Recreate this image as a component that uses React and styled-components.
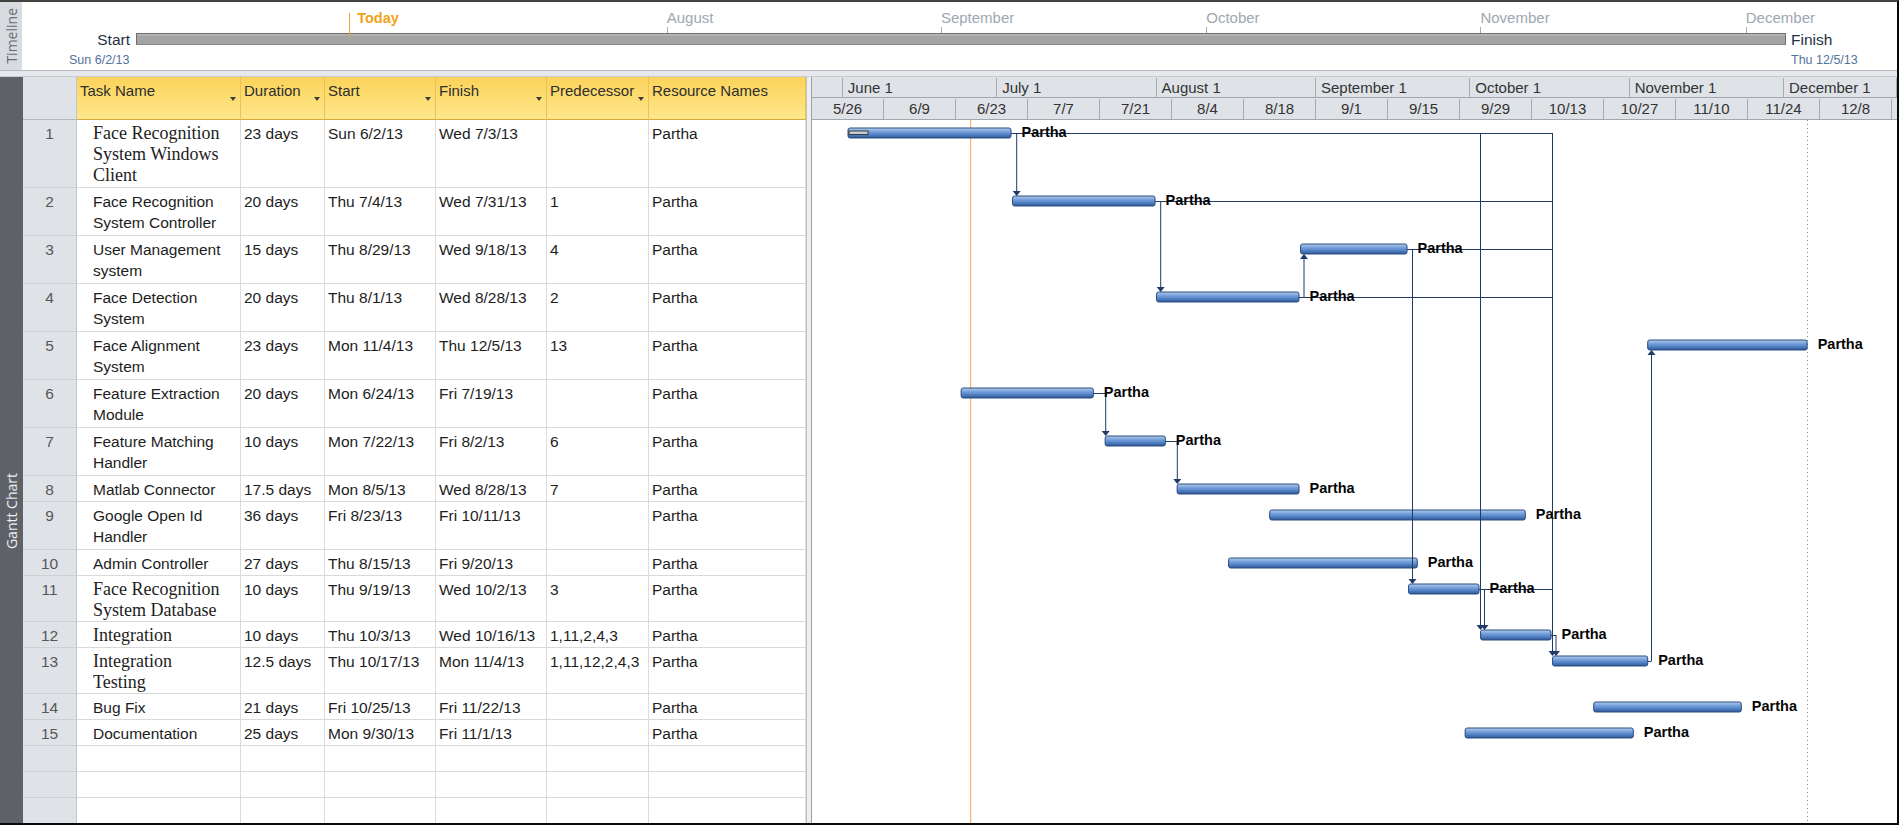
import React from 'react';
import styled, { createGlobalStyle } from 'styled-components';

const DAY = 72 / 14; // px per day in the gantt timescale
const COLS = '54px 164px 84px 111px 111px 102px 157px';

const GlobalStyle = createGlobalStyle`
  html, body {
    margin: 0;
    padding: 0;
    background: #fff;
  }
  body {
    font-family: "Liberation Sans", Arial, sans-serif;
    color: #1c1c1c;
  }
  * {
    box-sizing: border-box;
  }
`;

const tasks = [
  { id: 1, name: ['Face Recognition', 'System Windows', 'Client'], serif: true, duration: '23 days', start: 'Sun 6/2/13', finish: 'Wed 7/3/13', pred: '', h: 68, s: 7, e: 38.7 },
  { id: 2, name: ['Face Recognition', 'System Controller'], duration: '20 days', start: 'Thu 7/4/13', finish: 'Wed 7/31/13', pred: '1', h: 48, s: 39, e: 66.7 },
  { id: 3, name: ['User Management', 'system'], duration: '15 days', start: 'Thu 8/29/13', finish: 'Wed 9/18/13', pred: '4', h: 48, s: 95, e: 115.7 },
  { id: 4, name: ['Face Detection', 'System'], duration: '20 days', start: 'Thu 8/1/13', finish: 'Wed 8/28/13', pred: '2', h: 48, s: 67, e: 94.7 },
  { id: 5, name: ['Face Alignment', 'System'], duration: '23 days', start: 'Mon 11/4/13', finish: 'Thu 12/5/13', pred: '13', h: 48, s: 162.5, e: 193.5 },
  { id: 6, name: ['Feature Extraction', 'Module'], duration: '20 days', start: 'Mon 6/24/13', finish: 'Fri 7/19/13', pred: '', h: 48, s: 29, e: 54.7 },
  { id: 7, name: ['Feature Matching', 'Handler'], duration: '10 days', start: 'Mon 7/22/13', finish: 'Fri 8/2/13', pred: '6', h: 48, s: 57, e: 68.7 },
  { id: 8, name: ['Matlab Connector'], duration: '17.5 days', start: 'Mon 8/5/13', finish: 'Wed 8/28/13', pred: '7', h: 26, s: 71, e: 94.7 },
  { id: 9, name: ['Google Open Id', 'Handler'], duration: '36 days', start: 'Fri 8/23/13', finish: 'Fri 10/11/13', pred: '', h: 48, s: 89, e: 138.7 },
  { id: 10, name: ['Admin Controller'], duration: '27 days', start: 'Thu 8/15/13', finish: 'Fri 9/20/13', pred: '', h: 26, s: 81, e: 117.7 },
  { id: 11, name: ['Face Recognition', 'System Database'], serif: true, duration: '10 days', start: 'Thu 9/19/13', finish: 'Wed 10/2/13', pred: '3', h: 46, s: 116, e: 129.7 },
  { id: 12, name: ['Integration'], serif: true, duration: '10 days', start: 'Thu 10/3/13', finish: 'Wed 10/16/13', pred: '1,11,2,4,3', h: 26, s: 130, e: 143.7 },
  { id: 13, name: ['Integration', 'Testing'], serif: true, duration: '12.5 days', start: 'Thu 10/17/13', finish: 'Mon 11/4/13', pred: '1,11,12,2,4,3', h: 46, s: 144, e: 162.5 },
  { id: 14, name: ['Bug Fix'], duration: '21 days', start: 'Fri 10/25/13', finish: 'Fri 11/22/13', pred: '', h: 26, s: 152, e: 180.7 },
  { id: 15, name: ['Documentation'], duration: '25 days', start: 'Mon 9/30/13', finish: 'Fri 11/1/13', pred: '', h: 26, s: 127, e: 159.7 },
];

const columns = [
  { key: 'name', label: 'Task Name', arrow: true },
  { key: 'duration', label: 'Duration', arrow: true },
  { key: 'start', label: 'Start', arrow: true },
  { key: 'finish', label: 'Finish', arrow: true },
  { key: 'pred', label: 'Predecessor', arrow: true },
  { key: 'res', label: 'Resource Names', arrow: false },
];

const months = [
  { w: 6, label: '' },
  { w: 30, label: 'June 1' },
  { w: 31, label: 'July 1' },
  { w: 31, label: 'August 1' },
  { w: 30, label: 'September 1' },
  { w: 31, label: 'October 1' },
  { w: 30, label: 'November 1' },
  { w: 0, label: 'December 1' },
];

const weeks = ['5/26', '6/9', '6/23', '7/7', '7/21', '8/4', '8/18', '9/1', '9/15', '9/29', '10/13', '10/27', '11/10', '11/24', '12/8'];

const timelineMarks = [
  { label: 'August', d: 67 },
  { label: 'September', d: 98 },
  { label: 'October', d: 128 },
  { label: 'November', d: 159 },
  { label: 'December', d: 189 },
];

// timeline strip scale, days counted from 5/26
const tlX = (d) => 114 + (d - 7) * 8.845;

/* ---------- frame ---------- */

const Frame = styled.div`
  width: 1899px;
  height: 825px;
  border-top: 2px solid #424242;
  border-right: 2px solid #080808;
  border-bottom: 2px solid #080808;
  display: flex;
  flex-direction: column;
  overflow: hidden;
  background: #fff;
`;

const SideTab = styled.div`
  width: ${({ $w }) => $w}px;
  flex: none;
  display: flex;
  align-items: center;
  justify-content: center;
  padding-top: ${({ $offset }) => $offset || 0}px;
  background: ${({ $dark }) => ($dark ? '#5e6268' : '#d8dbe0')};
  color: ${({ $dark }) => ($dark ? '#eceef0' : '#686c72')};
`;

const SideLabel = styled.span`
  writing-mode: vertical-rl;
  transform: rotate(180deg);
  font-family: "Open Sans", "Liberation Sans", sans-serif;
  font-size: 14px;
  white-space: nowrap;
`;

/* ---------- timeline ---------- */

const TimelineBand = styled.section`
  height: 68px;
  flex: none;
  display: flex;
`;

const TimelineCanvas = styled.div`
  position: relative;
  flex: 1;
`;

const TimelineBar = styled.div`
  position: absolute;
  left: 114px;
  top: 31px;
  width: 1650px;
  height: 12px;
  border: 1px solid #6e6e6e;
  border-bottom-color: #878787;
  background: linear-gradient(#bcbcbc 0, #a5a5a5 25%, #a2a2a2 100%);
`;

const EndLabel = styled.div`
  position: absolute;
  top: ${({ $top }) => $top}px;
  left: ${({ $left }) => $left}px;
  width: ${({ $width }) => $width || 'auto'};
  text-align: ${({ $align }) => $align || 'left'};
  font-size: ${({ $small }) => ($small ? 12.5 : 15.5)}px;
  line-height: ${({ $small }) => ($small ? 15 : 18)}px;
  color: ${({ $small }) => ($small ? '#52739a' : '#1f3144')};
  white-space: nowrap;
`;

const DateMark = styled.div`
  position: absolute;
  top: 7px;
  display: flex;
  flex-direction: column;
  align-items: flex-start;
`;

const MarkText = styled.span`
  font-size: 15px;
  line-height: 18px;
  color: #9ea7b2;
  white-space: nowrap;
`;

const MarkTick = styled.span`
  width: 1px;
  height: 6px;
  background: #a8b0ba;
`;

const TodayMark = styled.div`
  position: absolute;
  top: 11px;
  width: 1px;
  height: 25px;
  background: #f2a23c;
`;

const TodayText = styled.span`
  position: absolute;
  left: 8px;
  top: -4px;
  font-size: 14.5px;
  line-height: 18px;
  font-weight: bold;
  color: #f0a218;
`;

const Separator = styled.div`
  height: 7px;
  flex: none;
  border-top: 1px solid #b6bac0;
  border-bottom: 1px solid #c8cbd0;
  background: #e6e8eb;
`;

/* ---------- sheet ---------- */

const Workspace = styled.main`
  flex: 1;
  display: flex;
  min-height: 0;
`;

const Sheet = styled.div`
  width: 783px;
  flex: none;
  display: flex;
  flex-direction: column;
  overflow: hidden;
`;

const GridRow = styled.div`
  display: grid;
  grid-template-columns: ${COLS};
  height: ${({ $h }) => $h}px;
  flex: none;
`;

const Corner = styled.div`
  background: #dfe3e8;
  border-right: 1px solid #c2c6cc;
  border-bottom: 1px solid #b7bbc1;
`;

const HeadCell = styled.div`
  display: flex;
  justify-content: space-between;
  align-items: flex-start;
  padding: 5px 0 0 3px;
  background: linear-gradient(#fbd35b 0%, #fddc70 45%, #fee78c 100%);
  border-right: 1px solid #e9c35a;
  border-bottom: 1px solid #d8aa36;
  font-size: 15px;
  line-height: 18px;
  color: #2e2e2e;
  white-space: nowrap;
`;

const SortArrow = styled.span`
  margin: 15px 4px 0 0;
  border-left: 3.5px solid transparent;
  border-right: 3.5px solid transparent;
  border-top: 4px solid #3c3c3c;
`;

const IdCell = styled.div`
  background: #dfe3e8;
  border-right: 1px solid #c2c6cc;
  border-bottom: 1px solid #cdd1d6;
  padding-top: 3px;
  text-align: center;
  font-size: 15.5px;
  line-height: 21px;
  color: #575757;
`;

const Cell = styled.div`
  padding: 3px 0 0 ${({ $indent }) => ($indent ? 16 : 3)}px;
  border-right: 1px solid #dcdcdc;
  border-bottom: 1px solid #d9d9d9;
  font-family: ${({ $serif }) => ($serif ? '"Liberation Serif", "Times New Roman", serif' : 'inherit')};
  font-size: ${({ $serif }) => ($serif ? 18 : 15.5)}px;
  line-height: 21px;
  white-space: nowrap;
  overflow: hidden;
  color: #1d1d1d;
`;

const Splitter = styled.div`
  width: 6px;
  flex: none;
  background: #eeeff1;
  border-left: 1px solid #bfc2c6;
  border-right: 1px solid #9c9fa3;
`;

/* ---------- chart ---------- */

const ChartPane = styled.div`
  flex: 1;
  display: flex;
  flex-direction: column;
  min-width: 0;
`;

const Tier = styled.div`
  height: ${({ $h }) => $h}px;
  flex: none;
  display: flex;
  padding-top: ${({ $pad }) => $pad || 0}px;
  background: #dfe2e7;
  border-bottom: 1px solid #a3a6aa;
`;

const TierCell = styled.div`
  flex: ${({ $grow }) => ($grow ? '1' : 'none')};
  padding-left: ${({ $center }) => ($center ? 0 : 5)}px;
  border-right: 1px solid #a7aaae;
  text-align: ${({ $center }) => ($center ? 'center' : 'left')};
  font-size: 15px;
  line-height: 20px;
  color: #333;
  white-space: nowrap;
  overflow: hidden;
`;

const ChartBody = styled.div`
  flex: 1;
  overflow: hidden;
`;

const LabelText = styled.text`
  font-family: "Liberation Sans", Arial, sans-serif;
  font-size: 14.5px;
  font-weight: bold;
  fill: #050505;
`;

function TimelineStrip() {
  return (
    <TimelineBand>
      <SideTab $w={22}>
        <SideLabel>Timeline</SideLabel>
      </SideTab>
      <TimelineCanvas>
        <TimelineBar />
        <EndLabel $top={29} $left={0} $width="108px" $align="right">Start</EndLabel>
        <EndLabel $top={51} $left={47} $small>Sun 6/2/13</EndLabel>
        <EndLabel $top={29} $left={1769}>Finish</EndLabel>
        <EndLabel $top={51} $left={1769} $small>Thu 12/5/13</EndLabel>
        {timelineMarks.map((m) => (
          <DateMark key={m.label} style={{ left: tlX(m.d) }}>
            <MarkText>{m.label}</MarkText>
            <MarkTick />
          </DateMark>
        ))}
        <TodayMark style={{ left: tlX(31.1) }}>
          <TodayText>Today</TodayText>
        </TodayMark>
      </TimelineCanvas>
    </TimelineBand>
  );
}

function TaskSheet() {
  const blanks = [0, 1, 2];
  return (
    <Sheet>
      <GridRow $h={43}>
        <Corner />
        {columns.map((c) => (
          <HeadCell key={c.key}>
            {c.label}
            {c.arrow && <SortArrow />}
          </HeadCell>
        ))}
      </GridRow>
      {tasks.map((t) => (
        <GridRow key={t.id} $h={t.h}>
          <IdCell>{t.id}</IdCell>
          <Cell $indent $serif={t.serif}>
            {t.name.map((line, i) => (
              <React.Fragment key={line}>
                {i > 0 && <br />}
                {line}
              </React.Fragment>
            ))}
          </Cell>
          <Cell>{t.duration}</Cell>
          <Cell>{t.start}</Cell>
          <Cell>{t.finish}</Cell>
          <Cell>{t.pred}</Cell>
          <Cell>Partha</Cell>
        </GridRow>
      ))}
      {blanks.map((b) => (
        <GridRow key={b} $h={26}>
          <IdCell />
          <Cell />
          <Cell />
          <Cell />
          <Cell />
          <Cell />
          <Cell />
        </GridRow>
      ))}
    </Sheet>
  );
}

function GanttBody() {
  const tops = [];
  let acc = 0;
  tasks.forEach((t) => {
    tops[t.id] = acc;
    acc += t.h;
  });
  const X = (d) => d * DAY;
  const cy = (id) => tops[id] + 13;
  const barTop = (id) => tops[id] + 8;
  const barBot = (id) => tops[id] + 18;
  const endX = (id) => X(tasks[id - 1].e);

  const runs = [
    [1, 740.5], [2, 740.5], [3, 740.5], [4, 740.5], [11, 740.5],
    [12, 744], [13, 839.5], [6, 293.7], [7, 365.3],
  ];
  const drops = [
    [204.7, cy(1), barTop(2)],
    [348.7, cy(2), barTop(4)],
    [492, cy(4), barBot(3)],
    [600.5, cy(3), barTop(11)],
    [668.5, cy(1), barTop(12)],
    [672.5, cy(11), barTop(12)],
    [740.5, cy(1), barTop(13)],
    [744, cy(12), barTop(13)],
    [839.5, cy(13), barBot(5)],
    [293.7, cy(6), barTop(7)],
    [365.3, cy(7), barTop(8)],
  ];

  return (
    <ChartBody>
      <svg width="1085" height="703" viewBox="0 0 1085 703">
        <defs>
          <linearGradient id="barFill" x1="0" y1="0" x2="0" y2="1">
            <stop offset="0" stopColor="#b4cdf0" />
            <stop offset="0.3" stopColor="#7fa7de" />
            <stop offset="0.65" stopColor="#5383c6" />
            <stop offset="1" stopColor="#2c5796" />
          </linearGradient>
        </defs>
        <line x1="158.7" y1="0" x2="158.7" y2="703" stroke="#f3a35e" strokeWidth="1" />
        <line x1="995.5" y1="0" x2="995.5" y2="703" stroke="#8a8a8a" strokeWidth="1" strokeDasharray="1 3" />
        {tasks.map((t) => (
          <rect
            key={t.id}
            x={X(t.s)}
            y={barTop(t.id)}
            width={X(t.e) - X(t.s)}
            height="10"
            rx="2"
            fill="url(#barFill)"
            stroke="#2b4d7e"
            strokeWidth="1"
          />
        ))}
        <rect x={X(7) + 1} y={cy(1) - 2} width="19" height="3.5" fill="#c9ccd1" stroke="#222" strokeWidth="0.8" />
        <g stroke="#1f3b66" strokeWidth="1" fill="none">
          {runs.map(([id, to]) => (
            <line key={`h${id}`} x1={endX(id)} y1={cy(id) + 0.5} x2={to} y2={cy(id) + 0.5} />
          ))}
          {drops.map(([x, y1, y2]) => (
            <line key={`v${x}`} x1={x} y1={y1} x2={x} y2={y2 > y1 ? y2 - 4 : y2 + 4} />
          ))}
        </g>
        <g fill="#1f3b66">
          {drops.map(([x, y1, y2]) => (
            <polygon
              key={`a${x}`}
              points={
                y2 > y1
                  ? `${x - 4},${y2 - 5} ${x + 4},${y2 - 5} ${x},${y2}`
                  : `${x - 4},${y2 + 5} ${x + 4},${y2 + 5} ${x},${y2}`
              }
            />
          ))}
        </g>
        {tasks.map((t) => (
          <LabelText key={`l${t.id}`} x={X(t.e) + 10.5} y={tops[t.id] + 16.5}>
            Partha
          </LabelText>
        ))}
      </svg>
    </ChartBody>
  );
}

function GanttChart() {
  return (
    <ChartPane>
      <Tier $h={21} $pad={1}>
        {months.map((m) => (
          <TierCell key={m.label || 'lead'} $grow={!m.w} style={m.w ? { width: m.w * DAY } : undefined}>
            {m.label}
          </TierCell>
        ))}
      </Tier>
      <Tier $h={22} $pad={1}>
        {weeks.map((w) => (
          <TierCell key={w} $center style={{ width: 14 * DAY }}>
            {w}
          </TierCell>
        ))}
        <TierCell $grow />
      </Tier>
      <GanttBody />
    </ChartPane>
  );
}

export default function App() {
  return (
    <>
      <GlobalStyle />
      <Frame>
        <TimelineStrip />
        <Separator />
        <Workspace>
          <SideTab $w={23} $dark $offset={122}>
            <SideLabel>Gantt Chart</SideLabel>
          </SideTab>
          <TaskSheet />
          <Splitter />
          <GanttChart />
        </Workspace>
      </Frame>
    </>
  );
}
